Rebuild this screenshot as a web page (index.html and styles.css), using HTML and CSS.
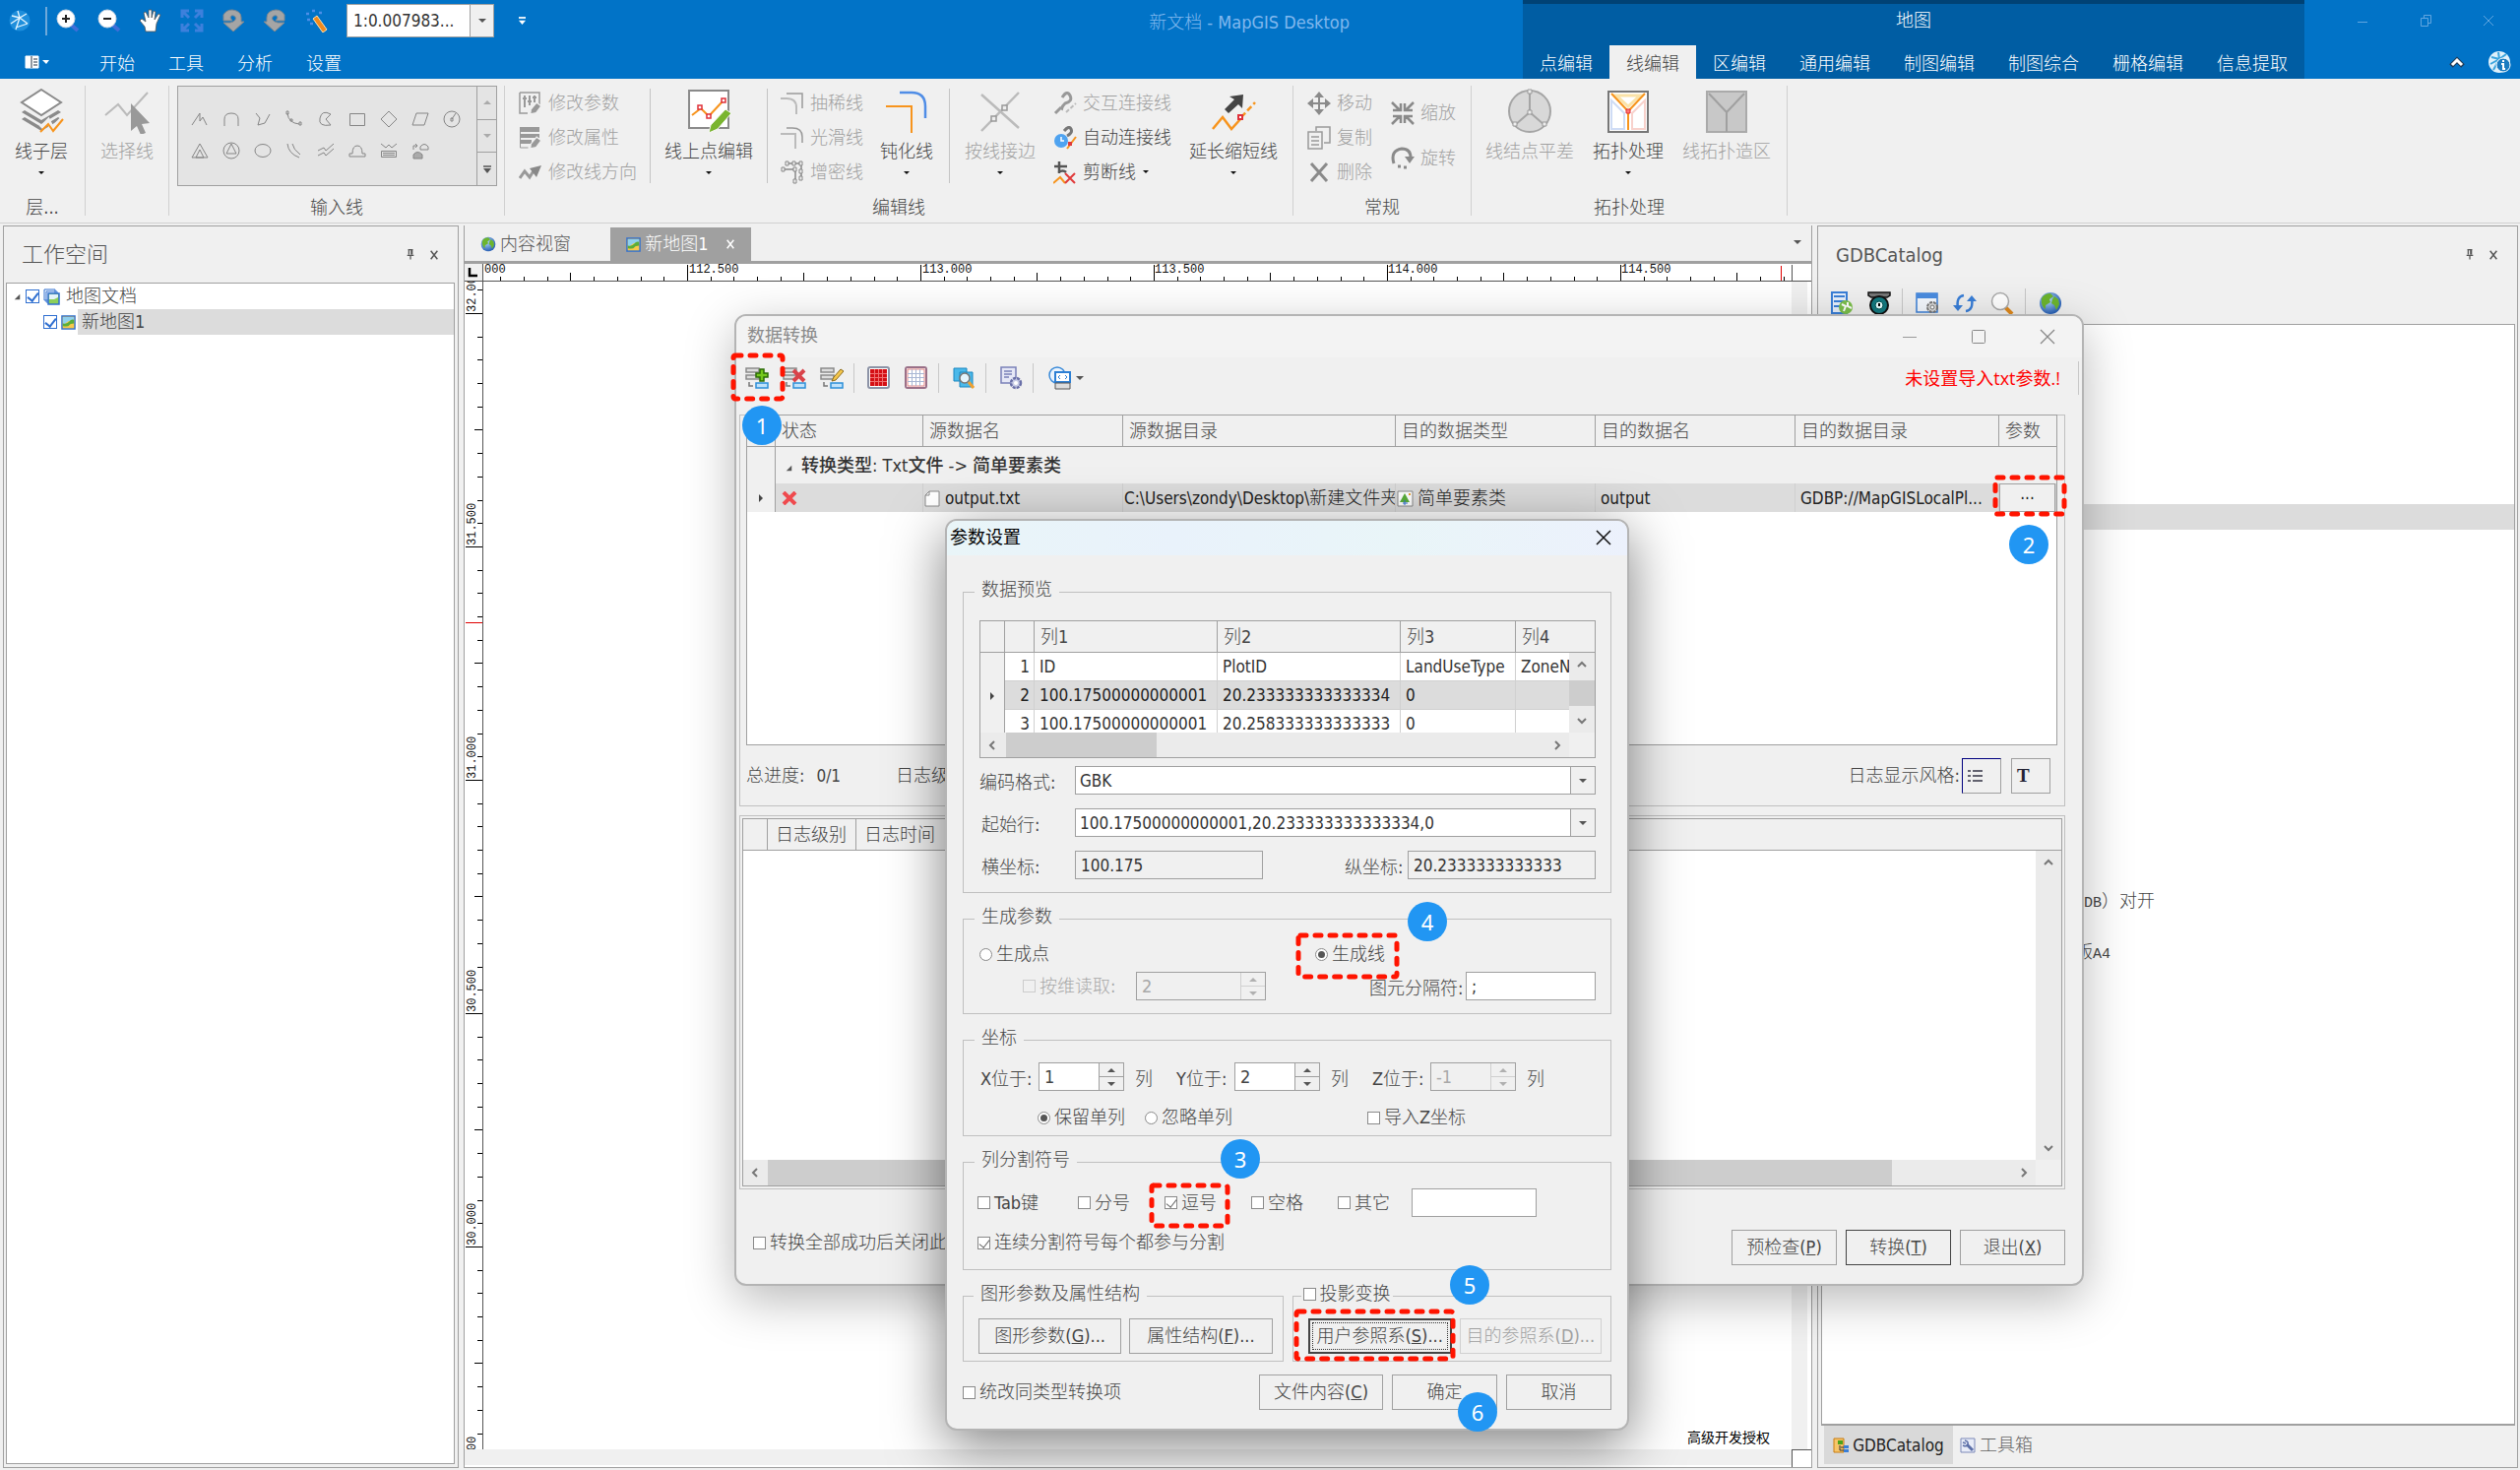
FILE: index.html
```html
<!DOCTYPE html>
<html lang="zh-CN">
<head>
<meta charset="utf-8">
<title>新文档 - MapGIS Desktop</title>
<link rel="stylesheet" href="styles.css">
</head>
<body>
<svg class="defs" aria-hidden="true">
  <defs>
    <radialGradient id="sea" cx="40%" cy="35%" r="70%"><stop offset="0" stop-color="#b5dcf8"/><stop offset="1" stop-color="#1d56b0"/></radialGradient>
    <symbol id="globe" viewBox="0 0 24 24"><circle cx="12" cy="12" r="11" fill="url(#sea)"/><path d="M3 7q3-5 9-5l3 3-4 3 1 3-5 3v4q-5-3-4-11zM16 5l4 3 1 5-3 6-2-5-3-2 1-4z" fill="#6cb52d"/></symbol>
    <symbol id="mapdoc" viewBox="0 0 16 16"><rect x="1" y="1" width="14" height="14" fill="#f8c94a" stroke="#2f6fd0" stroke-width="1.500"/><path d="M2 2h12v5Q9 5 6 8T2 9z" fill="#8fd0ee"/><path d="M2 9q5 1 7-2t5-2v4q-4 0-5 2t-7 1z" fill="#5aae3a"/></symbol>
    <symbol id="pin" viewBox="0 0 12 14"><path d="M3 1h6M4 1v6M7 1v6M8 1v6M2 8h8M6 8v5" stroke="#555" stroke-width="1.5" fill="none"/></symbol>
    <symbol id="cross" viewBox="0 0 12 12"><path d="M2 1l8 10M10 1L2 11" stroke="currentColor" stroke-width="1.800" fill="none"/></symbol>
    <symbol id="up" viewBox="0 0 12 12"><path d="M2 8l4-4 4 4" stroke="#777" stroke-width="2" fill="none"/></symbol>
    <symbol id="down" viewBox="0 0 12 12"><path d="M2 4l4 4 4-4" stroke="#777" stroke-width="2" fill="none"/></symbol>
    <symbol id="left" viewBox="0 0 12 12"><path d="M8 2L4 6l4 4" stroke="#777" stroke-width="2" fill="none"/></symbol>
    <symbol id="right" viewBox="0 0 12 12"><path d="M4 2l4 4-4 4" stroke="#777" stroke-width="2" fill="none"/></symbol>
    <symbol id="rows" viewBox="0 0 24 24"><path d="M1 2h13v4H1zM1 9h13v4H1z" fill="#ddd" stroke="#8a8a8a" stroke-width="1.5"/><path d="M4 16v4h4" stroke="#777" stroke-width="1.5" fill="none"/><rect x="11" y="17" width="12" height="5" fill="#bfe2fb" stroke="#2c8fd8" stroke-width="1.5"/></symbol>
    <symbol id="pencil" viewBox="0 0 24 24"><path d="M3 22l1-8L14 2l8 6-9 12z" fill="#999" stroke="#f0f0f0" stroke-width="2"/></symbol>
  </defs>
</svg>

<header class="titlebar">
  <div class="tb-left">
    <div class="quick">
      <svg class="i24" viewBox="0 0 24 24"><circle cx="12" cy="12" r="10.500" fill="#1f8fdc"/><path d="M4 7l8 2 7-4M12 9L8 21M12 9l8 6M3 15l9-6-2-7M8 19l12-4" stroke="#e6f6ff" stroke-width="1.300" fill="none"/></svg>
      <span class="q-sep"></span>
      <button class="q" aria-label="放大"><svg class="i24" viewBox="0 0 24 24"><path d="M15 16l7 6" stroke="#3f6fd8" stroke-width="4"/><circle cx="10" cy="10" r="9" fill="#fff" stroke="#cfd8e4"/><path d="M6 10h8M10 6v8" stroke="#222" stroke-width="2"/></svg></button>
      <button class="q" aria-label="缩小"><svg class="i24" viewBox="0 0 24 24"><path d="M15 16l7 6" stroke="#3f6fd8" stroke-width="4"/><circle cx="10" cy="10" r="9" fill="#fff" stroke="#cfd8e4"/><path d="M6 10h8" stroke="#222" stroke-width="2"/></svg></button>
      <button class="q" aria-label="漫游"><svg class="i24" viewBox="0 0 24 24"><path d="M7 23l-1-5-5-6 2-2 4 3L5 4l2-1 3 6V1h3v8l2-7 2 1-1 8 4-6 2 1-4 9-1 8z" fill="#fff" stroke="#555" stroke-width=".8"/></svg></button>
      <button class="q" aria-label="全图"><svg class="i24" viewBox="0 0 24 24"><path d="M2 9V2h7M2 2l7 7M15 2h7v7M22 2l-7 7M2 15v7h7M2 22l7-7M22 15v7h-7M22 22l-7-7" stroke="#3d80dc" stroke-width="3" fill="none"/></svg></button>
      <button class="q" aria-label="上一视图"><svg class="i24" viewBox="0 0 24 24"><path d="M2 12V6q3-5 9-5 9 1 9 8v4h3L12 23 2 14h7q7-2 5-6-4-3-5 1l2 3z" fill="#a5a5a5" stroke="#7d8790"/></svg></button>
      <button class="q" aria-label="下一视图"><svg class="i24" viewBox="0 0 24 24"><path d="M22 12V6q-3-5-9-5-9 1-9 8v4H1l11 10 10-9h-7q-7-2-5-6 4-3 5 1l-2 3z" fill="#a5a5a5" stroke="#7d8790"/></svg></button>
      <button class="q" aria-label="编辑工具"><svg class="i24" viewBox="0 0 24 24"><path d="M9 10l4-3 10 14-4 3z" fill="#f08a1d" stroke="#ffe1b0"/><path d="M2 5h3M8 2h3M3 11h3M15 4h3M6 15h3" stroke="#4d8ee8" stroke-width="2.500"/></svg></button>
      <div class="scale">
        <input type="text" value="1:0.007983..." aria-label="比例尺">
        <button aria-label="选择比例尺"><i class="tri"></i></button>
      </div>
      <button class="q q-more" aria-label="自定义"><svg width="7" height="9" viewBox="0 0 8 10"><path d="M0 1h8" stroke="#fff" stroke-width="2"/><path d="M0 4h8L4 9z" fill="#fff"/></svg></button>
      <h1 class="title">新文档 - MapGIS Desktop</h1>
    </div>
    <nav class="tabs">
      <button class="filebtn" aria-label="文件"><svg width="26" height="14" viewBox="0 0 26 14"><path d="M1 1h13v12H1z" fill="#fff" stroke="#fff"/><path d="M7 1v12M9 4h4M9 7h4M9 10h4" stroke="#234"/><path d="M18 5h7l-3 4z" fill="#fff"/></svg></button>
      <a href="#start">开始</a><a href="#tool">工具</a><a href="#analysis">分析</a><a href="#settings">设置</a>
    </nav>
  </div>
  <div class="ctx">
    <div class="ctx-title">地图</div>
    <nav class="tabs">
      <a href="#p">点编辑</a><a href="#l" class="on">线编辑</a><a href="#r">区编辑</a><a href="#g">通用编辑</a><a href="#m">制图编辑</a><a href="#z">制图综合</a><a href="#s">栅格编辑</a><a href="#x">信息提取</a>
    </nav>
  </div>
  <div class="tb-right">
    <div class="winbtns">
      <button aria-label="最小化"><svg width="12" height="12" viewBox="0 0 12 12"><path d="M1 7.500h10" stroke="#62a6e0"/></svg></button>
      <button aria-label="还原"><svg width="12" height="12" viewBox="0 0 12 12"><path d="M1.500 3.500h7v8h-7zM4.500 3V.5h7v8H9" stroke="#62a6e0" fill="none"/></svg></button>
      <button aria-label="关闭"><svg width="12" height="12" viewBox="0 0 12 12"><path d="M1 1l10 10M11 1L1 11" stroke="#62a6e0"/></svg></button>
    </div>
    <div class="helpbtns">
      <button aria-label="收起功能区"><svg width="16" height="14" viewBox="0 0 16 14"><path d="M2 11l6-6 6 6" stroke="#223a55" stroke-width="5" fill="none"/><path d="M3 10l5-5 5 5" stroke="#fff" stroke-width="3" fill="none"/></svg></button>
      <button aria-label="关于"><svg class="i24" viewBox="0 0 24 24"><circle cx="12" cy="12" r="11" fill="#dff1fb"/><path d="M4 7l8 2 7-5M12 9L6 20M3 14l9-5-1-7" stroke="#3ba5de" stroke-width="2" fill="none"/><circle cx="16" cy="15" r="7" fill="#1a7bc0" stroke="#fff"/><path d="M14 14h2v5h2M16 10v2" stroke="#fff" stroke-width="2" fill="none"/></svg></button>
    </div>
  </div>
</header>

<section class="ribbon" aria-label="线编辑">
  <div class="grp g-layer">
    <div class="grp-body">
      <button class="big"><svg viewBox="0 0 46 46"><path d="M3 31l20 12 20-12-3-2-17 10L6 29zM3 24l20 12 20-12-3-2-17 10L6 22z" fill="#8a8a8a"/><path d="M23 1l20 13-20 13L3 14z" fill="#fff" stroke="#8a8a8a" stroke-width="2"/><path d="M23 40l7-7 4 8 11-11" stroke="#f0f0f0" stroke-width="5" fill="none"/><path d="M22 44l8-8 5 7 10-12" stroke="#f7941d" stroke-width="2" fill="none"/></svg><span>线子层</span><i class="tri"></i></button>
    </div>
    <div class="grp-name">层...</div>
  </div>
  <div class="grp g-select">
    <div class="grp-body">
      <button class="big" disabled><svg viewBox="0 0 46 46"><path d="M1 27l13-11 9 11L44 4" stroke="#bbb" stroke-width="2" fill="none"/><path d="M27 15l19 20-8 1 4 9-5 2-4-9-6 5z" fill="#999"/></svg><span>选择线</span></button>
    </div>
    <div class="grp-name"></div>
  </div>
  <div class="grp g-input">
    <div class="grp-body">
      <div class="gallery">
        <div class="cells">
          <svg viewBox="0 0 18 18"><path d="M1 15L9 3v8l3-4 4 8"/></svg><svg viewBox="0 0 18 18"><path d="M2 16V9q0-6 7-6t7 6v7"/></svg><svg viewBox="0 0 18 18"><path d="M2 3l4 5-2 7 7-2 5-9"/></svg><svg viewBox="0 0 18 18"><path d="M2 3q1 10 12 11M1 1h2v3H1zM14 12h2v3h-2zM5 9h2v2H5z"/></svg><svg viewBox="0 0 18 18"><path d="M14 4Q5-1 3 8t11 7l-5-6 5-5z"/></svg><svg viewBox="0 0 18 18"><path d="M1.500 3.500h15v12h-15z"/></svg><svg viewBox="0 0 18 18"><path d="M9 1l8 8-8 8-8-8z"/></svg><svg viewBox="0 0 18 18"><path d="M5 3h12l-4 12H1z"/></svg><svg viewBox="0 0 18 18"><circle cx="9" cy="9" r="8"/><path d="M9 9l4-6M8 8h2v3H8z"/></svg>
          <svg viewBox="0 0 18 18"><path d="M9 2l8 14H1zM9 8l-4 8h8z"/></svg><svg viewBox="0 0 18 18"><circle cx="9" cy="9" r="8"/><path d="M9 2l5 10H4z"/></svg><svg viewBox="0 0 18 18"><ellipse cx="9" cy="9" rx="8" ry="6.500"/></svg><svg viewBox="0 0 18 18"><path d="M2 2q1 10 12 14M7 2q1 6 8 11"/></svg><svg viewBox="0 0 18 18"><path d="M1 9l6-3 2 3 8-7M1 14l6-3 2 3 8-7"/></svg><svg viewBox="0 0 18 18"><path d="M1 15h16v-3h-3q0-8-5-8t-5 8H1z"/></svg><svg viewBox="0 0 18 18"><path d="M1 2l5 4 3-3 3 3 5-4M1.500 9.500h15v6h-15zM3 11.500h12M3 13.500h12" /></svg><svg viewBox="0 0 18 18"><path d="M9 8V5q4-5 8 0v3zM2 8V4h4M4 2l2 2-2 2"/><path d="M2 17v-4q4-5 9 0v4z" fill="#aaa"/></svg>
        </div>
        <div class="gal-scroll">
          <button aria-label="上一行"><i class="tri up dim"></i></button>
          <button aria-label="下一行"><i class="tri dim"></i></button>
          <button aria-label="展开"><svg width="8" height="8" viewBox="0 0 8 8"><path d="M0 1h8" stroke="#555" stroke-width="1.500"/><path d="M0 3h8L4 8z" fill="#555"/></svg></button>
        </div>
      </div>
    </div>
    <div class="grp-name">输入线</div>
  </div>
  <div class="grp g-edit">
    <div class="grp-body">
      <div class="smalls c1">
        <button disabled><svg viewBox="0 0 24 24"><path d="M1 1h20v12M1 1v21h8" fill="none" stroke="#999" stroke-width="1.500"/><path d="M6 4v12M11 4v10M16 4v7M4 7h4M9 10h4M14 6h4" stroke="#999" stroke-width="2"/><use href="#pencil" x="10" y="10" width="14" height="14"/></svg>修改参数</button>
        <button disabled><svg viewBox="0 0 24 24"><path d="M1 1h20v5H1zM1 8h20v4H1zM1 14h12v4H1z" fill="#999"/><path d="M1.500 6v16h8" fill="none" stroke="#999"/><use href="#pencil" x="10" y="10" width="14" height="14"/></svg>修改属性</button>
        <button disabled><svg viewBox="0 0 24 24"><path d="M1 18l5-7 5 6 5-8" fill="none" stroke="#999" stroke-width="3"/><path d="M11 8l12-3-5 12z" fill="#888"/></svg>修改线方向</button>
      </div>
      <span class="r-sep"></span>
      <button class="big w118"><svg viewBox="0 0 46 46"><path d="M3 2h40v38H3z" fill="#fff" stroke="#8a8a8a" stroke-width="2"/><path d="M6 27l9-7 8 8 14-15" stroke="#f7941d" stroke-width="2" fill="none"/><path d="M12 17h4v4h-4zM21 26h4v4h-4zM36 10h4v4h-4z" fill="#fff" stroke="#e0303a" stroke-width="1.500"/><path d="M23 45l2-8 15-16 6 4-14 16z" fill="#7ab530" stroke="#f8f8f8"/></svg><span>线上点编辑</span><i class="tri"></i></button>
      <span class="r-sep"></span>
      <div class="smalls c2">
        <button disabled><svg viewBox="0 0 24 24"><path d="M6 2h16v15" fill="none" stroke="#999" stroke-width="1.500"/><path d="M0 7h6q10 0 10 9v7" fill="none" stroke="#bbb" stroke-width="2"/></svg>抽稀线</button>
        <button disabled><svg viewBox="0 0 24 24"><path d="M6 2h6q10 0 10 9v6" fill="none" stroke="#999" stroke-width="1.500"/><path d="M0 8h15v15" fill="none" stroke="#bbb" stroke-width="2"/></svg>光滑线</button>
        <button disabled><svg viewBox="0 0 24 24"><path d="M6 3h15v15M2 9h13v13" fill="none" stroke="#888" stroke-width="1.500"/><path d="M5 1h3v4H5zM12 1h3v4h-3zM19 1h3v4h-3zM19 9h3v4h-3zM1 7h3v4H1zM13 7h3v4h-3zM19 16h3v4h-3zM13 19h3v4h-3z" fill="#eee" stroke="#888"/></svg>增密线</button>
      </div>
      <button class="big w86"><svg viewBox="0 0 46 46"><path d="M16 4h12q14 0 14 14v12" stroke="#4f8de6" stroke-width="2.500" fill="none"/><path d="M2 18h26v27" stroke="#f7941d" stroke-width="2" fill="none"/></svg><span>钝化线</span><i class="tri"></i></button>
      <span class="r-sep"></span>
      <button class="big w102" disabled><svg viewBox="0 0 46 46"><path d="M4 6l38 34M42 4L4 43" stroke="#bbb" stroke-width="2.500"/><path d="M25 17h5v5h-5zM14 28h5v5h-5z" fill="#eee" stroke="#999" stroke-width="1.500"/></svg><span>按线接边</span><i class="tri"></i></button>
      <div class="smalls c3">
        <button disabled><svg viewBox="0 0 24 24"><path d="M9 6q5-8 8-2t-5 8q-5 5-2 6M2 22l6-6" stroke="#999" stroke-width="3" fill="none"/><path d="M13 21l10-9" stroke="#bbb" stroke-width="2" stroke-dasharray="4 2"/></svg>交互连接线</button>
        <button><svg viewBox="0 0 24 24"><path d="M11 5q5-6 7-2t-4 7" stroke="#777" stroke-width="3" fill="none"/><circle cx="8" cy="15" r="7" fill="#4fa3f0"/><path d="M8 11v4h3" stroke="#fff" stroke-width="1.500" fill="none"/><path d="M14 23l9-12" stroke="#f7941d" stroke-width="2"/><path d="M15 16h4v4h-4z" fill="#e03a3a"/></svg>自动连接线</button>
        <button><svg viewBox="0 0 24 24"><path d="M6 1v12M1 6h13M5 12q5-3 8 0" stroke="#555" stroke-width="2.500" fill="none"/><path d="M0 23l7-6 5 6" stroke="#f7941d" stroke-width="2" fill="none"/><path d="M12 13l10 10M22 13L12 23" stroke="#e03a3a" stroke-width="2"/></svg>剪断线<i class="tri"></i></button>
      </div>
      <button class="big grow"><svg viewBox="0 0 46 46"><path d="M14 21l10-10-5-3 14-2-1 14-4-4-10 9z" fill="#444"/><path d="M2 41l10-12 9 12 10-11" stroke="#f7941d" stroke-width="2.500" fill="none"/><path d="M31 29l14-15" stroke="#f7941d" stroke-width="2.500" stroke-dasharray="6 3"/><path d="M28 27h4v4h-4z" fill="#fff" stroke="#e0303a" stroke-width="2"/></svg><span>延长缩短线</span><i class="tri"></i></button>
    </div>
    <div class="grp-name">编辑线</div>
  </div>
  <div class="grp g-common">
    <div class="grp-body">
      <div class="smalls c4">
        <button disabled><svg viewBox="0 0 24 24"><path d="M12 0l5 6h-4v5h5V7l6 5-6 5v-4h-5v5h4l-5 6-5-6h4v-5H6v4l-6-5 6-5v4h5V6H7z" fill="#8a8a8a"/></svg>移动</button>
        <button disabled><svg viewBox="0 0 24 24"><path d="M9 5V1h14v16h-6" fill="none" stroke="#999" stroke-width="1.500"/><path d="M1 6h14v17H1zM4 11h8M4 15h8M4 19h8" fill="none" stroke="#999" stroke-width="1.500"/></svg>复制</button>
        <button disabled><svg viewBox="0 0 24 24"><path d="M4 3l16 18M20 3L4 21" stroke="#8a8a8a" stroke-width="3"/></svg>删除</button>
      </div>
      <div class="smalls c5">
        <button disabled><svg viewBox="0 0 24 24"><path d="M1 1l8 8M2 9h8V2M23 1l-8 8M22 9h-8V2M1 23l8-8M2 15h8v7M23 23l-8-8M22 15h-8v7" stroke="#8a8a8a" stroke-width="2.500" fill="none"/></svg>缩放</button>
        <button disabled><svg viewBox="0 0 24 24"><path d="M3 17Q-1 4 11 2q9 0 9 9" stroke="#8a8a8a" stroke-width="3" fill="none"/><path d="M14 10h10l-5 7z" fill="#8a8a8a"/><path d="M7 20h3M13 21h3" stroke="#8a8a8a" stroke-width="3"/></svg>旋转</button>
      </div>
    </div>
    <div class="grp-name">常规</div>
  </div>
  <div class="grp g-topo">
    <div class="grp-body">
      <button class="big w118" disabled><svg viewBox="0 0 46 46"><circle cx="23" cy="23" r="21" fill="#d8d8d8" stroke="#a5a5a5" stroke-width="2"/><path d="M23 3v21L8 37M23 24l15 13" stroke="#a5a5a5" stroke-width="2" fill="none"/><path d="M21 1h4v4h-4zM21 22h4v4h-4zM6 34h4v4H6zM36 34h4v4h-4z" fill="#eee" stroke="#999"/></svg><span>线结点平差</span></button>
      <button class="big w82"><svg viewBox="0 0 46 46"><path d="M3 3h40v41H3z" fill="#fff" stroke="#777" stroke-width="2"/><path d="M11 7h24L23 18z" fill="none" stroke="#fbe3a8" stroke-width="3"/><path d="M6 12l13 13v16H6z" fill="none" stroke="#cfdcf5" stroke-width="2"/><path d="M40 12L27 25v16h13z" fill="none" stroke="#f8d2cc" stroke-width="2"/><path d="M6 5l17 18L40 5M23 23v19" stroke="#f7941d" stroke-width="2" fill="none"/><path d="M21 21h4v4h-4z" fill="#f77" stroke="#e0303a"/></svg><span>拓扑处理</span><i class="tri"></i></button>
      <button class="big w118" disabled><svg viewBox="0 0 46 46"><path d="M3 3h40v41H3z" fill="#c8c8c8" stroke="#aaa" stroke-width="2"/><path d="M5 5l18 19L41 5M23 24v20" stroke="#a0a0a0" stroke-width="2" fill="none"/></svg><span>线拓扑造区</span></button>
    </div>
    <div class="grp-name">拓扑处理</div>
  </div>
</section>

<main class="work">
  <aside class="panel workspace">
    <div class="panel-head"><h2>工作空间</h2><button aria-label="固定"><svg width="10" height="13"><use href="#pin"/></svg></button><button aria-label="关闭"><svg width="10" height="10"><use href="#cross"/></svg></button></div>
    <ul class="tree">
      <li><svg width="7" height="7" viewBox="0 0 9 9"><path d="M8 1v7H1z" fill="#555"/></svg><input type="checkbox" id="t1" checked><svg width="17" height="17" viewBox="0 0 17 17"><path d="M1 1h11v11H1zM3 3h11v11H3z" fill="#fff" stroke="#2f6fd0"/><path d="M5 5h11v11H5z" fill="#8ccf5a" stroke="#2f6fd0" stroke-width="1.500"/><path d="M6 6h9v3l-4 2H6z" fill="#e4f3fa"/></svg><label for="t1">地图文档</label></li>
      <li class="child"><input type="checkbox" id="t2" checked><svg width="15" height="15"><use href="#mapdoc"/></svg><label for="t2">新地图1</label></li>
    </ul>
  </aside>

  <section class="center">
    <div class="doctabs">
      <button class="doctab"><svg width="16" height="16"><use href="#globe"/></svg>内容视窗</button>
      <button class="doctab on"><svg width="15" height="15"><use href="#mapdoc"/></svg>新地图1<svg class="x" width="10" height="10"><use href="#cross"/></svg></button>
      <button class="tablist" aria-label="窗口列表"><i class="tri"></i></button>
    </div>
    <div class="canvas">
      <div class="origin"><svg width="18" height="17" viewBox="0 0 18 17"><path d="M5 4v8h8" stroke="#000" stroke-width="2.500" fill="none"/></svg></div>
      <svg class="ruler-h">
        <defs><pattern id="rh" x="207" width="237" height="18" patternUnits="userSpaceOnUse"><path d="M.5 1v17M24.500 13v5M47.500 13v5M71.500 13v5M95.500 13v5M118.500 9v9M142.500 13v5M166.500 13v5M190.500 13v5M213.500 13v5" stroke="#000"/></pattern></defs>
        <rect width="1329" height="18" fill="url(#rh)"/>
        <path d="M1318.500 2v16" stroke="#e00000"/><path d="M1329.500 1v17" stroke="#555"/>
        <text x="1" y="9">000</text><text x="209" y="9">112.500</text><text x="446" y="9">113.000</text><text x="682" y="9">113.500</text><text x="919" y="9">114.000</text><text x="1156" y="9">114.500</text>
      </svg>
      <svg class="ruler-v">
        <defs><pattern id="rv" y="32" width="18" height="237" patternUnits="userSpaceOnUse"><path d="M1 .5h17M13 24.500h5M13 47.500h5M13 71.500h5M13 95.500h5M10 118.500h8M13 142.500h5M13 166.500h5M13 190.500h5M13 213.500h5" stroke="#000"/></pattern></defs>
        <rect width="18" height="1186" fill="url(#rv)"/>
        <path d="M1 346.500h17" stroke="#e00000"/>
        <text transform="translate(11 31) rotate(-90)">32.000</text><text transform="translate(11 268) rotate(-90)">31.500</text><text transform="translate(11 505) rotate(-90)">31.000</text><text transform="translate(11 742) rotate(-90)">30.500</text><text transform="translate(11 979) rotate(-90)">30.000</text><text transform="translate(11 1216) rotate(-90)">29.500</text>
      </svg>
      <div class="map"><span class="licence">高级开发授权</span></div>
      <div class="m-vs"></div>
      <div class="m-hs"></div>
      <div class="m-corner"></div>
    </div>
  </section>

  <aside class="panel catalog">
    <div class="panel-head"><h2>GDBCatalog</h2><button aria-label="固定"><svg width="10" height="13"><use href="#pin"/></svg></button><button aria-label="关闭"><svg width="10" height="10"><use href="#cross"/></svg></button></div>
    <div class="cat-tools">
      <button aria-label="附加数据库"><svg class="i24" viewBox="0 0 24 24"><path d="M2 1h15v21H2z" fill="#e9f1fd" stroke="#3a7fd8" stroke-width="2"/><path d="M4 5h11M4 10h11M4 15h6" stroke="#3a7fd8" stroke-width="2"/><circle cx="16" cy="16" r="7" fill="#7cc04b"/><path d="M12 13l4 2-2 5M18 11v4l4 2" stroke="#fff" stroke-width="2" fill="none"/></svg></button>
      <button aria-label="数据源"><svg class="i24" viewBox="0 0 24 24"><path d="M1 1h22v3l-3 2H4L1 4z" fill="#777" stroke="#111" stroke-width="1.500"/><circle cx="12" cy="14" r="9" fill="#147a80" stroke="#111" stroke-width="2"/><circle cx="12" cy="14" r="4" fill="#e8ffff" stroke="#055"/><path d="M11 12h2v3h-2z"/></svg></button>
      <span class="t-sep"></span>
      <button aria-label="环境设置"><svg class="i24" viewBox="0 0 24 24"><path d="M1 2h21v19H1z" fill="#f4f8fe" stroke="#3a7fd8" stroke-width="1.500"/><path d="M1 2h21v5H1z" fill="#4a8ce0"/><circle cx="17" cy="16" r="5" fill="#ddd" stroke="#777" stroke-width="2" stroke-dasharray="3 1"/><circle cx="17" cy="16" r="2" fill="#fff" stroke="#777"/></svg></button>
      <button aria-label="刷新"><svg class="i24" viewBox="0 0 24 24"><path d="M11 4Q3 5 5 17M13 20q8-1 6-13" stroke="#3a7fd8" stroke-width="2.500" fill="none"/><path d="M0 14h10l-5 6zM14 10h10l-5-6z" fill="#3a7fd8"/></svg></button>
      <button aria-label="搜索"><svg class="i24" viewBox="0 0 24 24"><path d="M15 16l7 7" stroke="#e08a1d" stroke-width="4"/><circle cx="10" cy="10" r="8.500" fill="#fff" stroke="#aaa" stroke-width="1.500"/></svg></button>
      <span class="t-sep"></span>
      <button aria-label="地球"><svg class="i24"><use href="#globe"/></svg></button>
    </div>
    <ul class="cat-list">
      <li class="picked"></li>
      <li class="sys">系统库（<span>GDB</span>）对开</li>
      <li class="tpl">模板横版<span>A4</span></li>
    </ul>
    <div class="cat-tabs">
      <button class="on"><svg width="16" height="16" viewBox="0 0 16 16"><path d="M1 1h10v14H1z" fill="#f7c56a" stroke="#c87d10"/><path d="M5 3h5v4H5z" fill="#4ba31c"/><path d="M7 8v5h4M8 10h3" stroke="#333" fill="none"/><path d="M11 8h5v3h-5zM11 12h5v3h-5z" fill="#3a7fd8"/></svg>GDBCatalog</button>
      <button><svg width="16" height="16" viewBox="0 0 16 16"><path d="M1 1h14v14H1z" fill="#e8ecf8" stroke="#7c89b8"/><path d="M7 7l6 6" stroke="#5c6fa8" stroke-width="3"/><path d="M5 3q4 1 3 4t-5 1M3 5l3 1" stroke="#5c6fa8" stroke-width="1.500" fill="none"/></svg>工具箱</button>
    </div>
  </aside>
</main>

<section class="dlg convert" role="dialog" aria-label="数据转换">
  <div class="dlg-title"><span>数据转换</span>
    <button aria-label="最小化"><svg width="16" height="16" viewBox="0 0 16 16"><path d="M1 8.500h14" stroke="#999"/></svg></button>
    <button aria-label="最大化"><svg width="16" height="16" viewBox="0 0 16 16"><rect x="1.500" y="1.500" width="13" height="13" rx="1" fill="none" stroke="#888"/></svg></button>
    <button aria-label="关闭"><svg width="16" height="16" viewBox="0 0 16 16"><path d="M1 1l14 14M15 1L1 15" stroke="#888" stroke-width="1.300"/></svg></button>
  </div>
  <div class="cv-tools">
    <button aria-label="添加"><svg class="i24" viewBox="0 0 24 24"><use href="#rows"/><path d="M15 3h4v4h4v4h-4v4h-4v-4h-4V7h4z" fill="#76c91e" stroke="#2a6b06" stroke-width="1.500"/></svg></button>
    <button aria-label="删除"><svg class="i24" viewBox="0 0 24 24"><use href="#rows"/><path d="M11 4l11 11M22 4L11 15" stroke="#d9434a" stroke-width="4"/></svg></button>
    <button aria-label="编辑"><svg class="i24" viewBox="0 0 24 24"><use href="#rows"/><path d="M12 15l2-4 7-8 3 2-8 9z" fill="#f4c64c" stroke="#8b6a1a"/></svg></button>
    <span class="t-sep"></span>
    <button aria-label="全选"><svg class="i24" viewBox="0 0 24 24"><rect x="1" y="1" width="21" height="21" rx="2" fill="#fff" stroke="#8c93a6" stroke-width="2"/><path d="M3 3h17v17H3z" fill="#d40f14"/><path d="M7.500 3v17M11.500 3v17M15.500 3v17M3 7.500h17M3 11.500h17M3 15.500h17" stroke="#f07070"/></svg></button>
    <button aria-label="反选"><svg class="i24" viewBox="0 0 24 24"><rect x="1" y="1" width="21" height="21" rx="2" fill="#fff" stroke="#9a7088" stroke-width="2"/><path d="M3 3h17v17H3z" fill="#fff" stroke="#e08080"/><path d="M7.500 3v17M11.500 3v17M15.500 3v17M3 7.500h17M3 11.500h17M3 15.500h17" stroke="#a9b7d4"/></svg></button>
    <span class="t-sep"></span>
    <button aria-label="预览"><svg class="i24" viewBox="0 0 24 24"><path d="M2 2h13v13H2zM8 6h13v15H8z" fill="#4bb9ea" stroke="#1b86c0"/><circle cx="13" cy="12" r="5" fill="#e4f4fc" stroke="#777" stroke-width="1.500"/><path d="M17 16l5 6" stroke="#f0a030" stroke-width="3"/></svg></button>
    <span class="t-sep"></span>
    <button aria-label="参数"><svg class="i24" viewBox="0 0 24 24"><path d="M2 1h15v16H2z" fill="#e6e8f6" stroke="#7a80b8" stroke-width="1.500"/><path d="M5 5h8M5 8h8M5 11h5" stroke="#7a80b8" stroke-width="1.500"/><circle cx="17" cy="17" r="5" fill="#c9cde6" stroke="#6a70a8" stroke-width="2.500" stroke-dasharray="3 1"/><circle cx="17" cy="17" r="2" fill="#fff"/></svg></button>
    <span class="t-sep"></span>
    <button class="drop" aria-label="工具"><svg class="i24" viewBox="0 0 24 24"><circle cx="9" cy="9" r="8" fill="#eaf3fd" stroke="#3a8ad8" stroke-width="1.500"/><path d="M7 6h15v10H7z" fill="#fff" stroke="#2c7fd4" stroke-width="2"/><path d="M12 9l-2 2 2 2M17 9l2 2-2 2" stroke="#2c7fd4" fill="none"/><path d="M7 17h15v6H7z" fill="#ddd" stroke="#555"/></svg><i class="tri"></i></button>
    <span class="warn">未设置导入txt参数.!</span>
    <span class="t-sep last"></span>
  </div>
  <div class="frame one">
    <div class="grid-box">
      <table class="jobs">
        <colgroup><col class="j0"><col class="j1"><col class="j2"><col class="j3"><col class="j4"><col class="j5"><col class="j6"><col></colgroup>
        <thead><tr><th></th><th>状态</th><th>源数据名</th><th>源数据目录</th><th>目的数据类型</th><th>目的数据名</th><th>目的数据目录</th><th>参数</th></tr></thead>
        <tbody>
          <tr class="jgroup"><td></td><td colspan="7"><svg width="7" height="7" viewBox="0 0 9 9"><path d="M8 1v7H1z" fill="#555"/></svg><b>转换类型: Txt文件 -&gt; 简单要素类</b></td></tr>
          <tr class="job"><td><svg width="6" height="8" viewBox="0 0 6 8"><path d="M1 0l4 4-4 4z" fill="#444"/></svg></td><td class="st"><svg width="16" height="14" viewBox="0 0 16 14"><path d="M2 1l12 12M14 1L2 13" stroke="#ef4a4e" stroke-width="4"/></svg></td><td><svg width="17" height="17" viewBox="0 0 17 17"><path d="M5 1h10v15H1V5z" fill="#fff" stroke="#888"/><path d="M5 1v4H1" fill="none" stroke="#888"/></svg>output.txt</td><td>C:\Users\zondy\Desktop\<span class="cj">新建文件夹</span></td><td><svg width="17" height="17" viewBox="0 0 17 17"><path d="M1 1h15v15H1z" fill="#fff" stroke="#888"/><path d="M8 3l5 9H3z" fill="#5aae3a"/><path d="M8 10v5M6 13h5" stroke="#2f6fd0"/><path d="M12 3h2v2h-2z" fill="#e8a030"/></svg><span class="cj">简单要素类</span></td><td class="pad">output</td><td class="pad">GDBP://MapGISLocalPl...</td><td class="btncell"><button aria-label="参数设置">···</button></td></tr>
        </tbody>
      </table>
    </div>
    <div class="progress"><span>总进度:</span><span class="count">0/1</span><span class="lvl">日志级别:</span><span class="style">日志显示风格:</span>
      <button class="sq on" aria-label="列表"><svg width="16" height="14" viewBox="0 0 16 14"><path d="M0 2h3M0 7h3M0 12h3M5 2h10M5 7h10M5 12h10" stroke="#334" stroke-width="1.500"/></svg></button><button class="sq t">T</button></div>
  </div>
  <div class="frame two">
    <div class="log">
      <table><colgroup><col class="l0"><col class="l1"><col></colgroup><thead><tr><th></th><th>日志级别</th><th>日志时间</th></tr></thead></table>
      <div class="log-body"></div>
      <div class="vs"><svg width="12" height="12"><use href="#up"/></svg><svg width="12" height="12"><use href="#down"/></svg></div>
      <div class="hs"><svg width="12" height="12"><use href="#left"/></svg><span class="thumb"></span><svg width="12" height="12"><use href="#right"/></svg></div>
    </div>
  </div>
  <div class="cv-foot">
    <label class="opt"><input type="checkbox">转换全部成功后关闭此对话框</label>
    <button class="btn">预检查(<u>P</u>)</button><button class="btn strong">转换(<u>T</u>)</button><button class="btn">退出(<u>X</u>)</button>
  </div>
</section>

<section class="dlg params" role="dialog" aria-label="参数设置">
  <div class="dlg-title"><span>参数设置</span><button aria-label="关闭"><svg width="16" height="16" viewBox="0 0 16 16"><path d="M1 1l14 14M15 1L1 15" stroke="#111" stroke-width="1.500"/></svg></button></div>
  <form class="pm">
    <fieldset class="f-prev"><legend>数据预览</legend>
      <div class="prev">
        <div class="prev-clip">
        <table>
          <colgroup><col class="p0"><col class="p1"><col class="p2"><col class="p3"><col class="p4"><col class="p5"></colgroup>
          <thead><tr><th></th><th></th><th>列1</th><th>列2</th><th>列3</th><th>列4</th></tr></thead>
          <tbody>
            <tr><td></td><td>1</td><td>ID</td><td>PlotID</td><td>LandUseType</td><td>ZoneN</td></tr>
            <tr class="cur"><td><svg width="6" height="8" viewBox="0 0 6 8"><path d="M1 0l4 4-4 4z" fill="#444"/></svg></td><td>2</td><td>100.17500000000001</td><td>20.233333333333334</td><td>0</td><td></td></tr>
            <tr><td></td><td>3</td><td>100.17500000000001</td><td>20.258333333333333</td><td>0</td><td></td></tr>
          </tbody>
        </table>
        </div>
        <div class="vs"><svg width="12" height="12"><use href="#up"/></svg><span class="thumb"></span><svg width="12" height="12"><use href="#down"/></svg></div>
        <div class="hs"><svg width="12" height="12"><use href="#left"/></svg><span class="thumb"></span><svg width="12" height="12"><use href="#right"/></svg></div>
      </div>
      <div class="row"><label class="lb" for="enc">编码格式:</label><div class="combo"><select id="enc"><option>GBK</option></select><span><i class="tri"></i></span></div></div>
      <div class="row"><label class="lb nudge" for="st">起始行:</label><div class="combo"><select id="st"><option>100.17500000000001,20.233333333333334,0</option></select><span><i class="tri"></i></span></div></div>
      <div class="row"><label class="lb nudge" for="cx">横坐标:</label><input class="tx ro w191" id="cx" value="100.175" readonly><label class="lb2" for="cy">纵坐标:</label><input class="tx ro w191" id="cy" value="20.2333333333333" readonly></div>
    </fieldset>
    <fieldset class="f-gen"><legend>生成参数</legend>
      <div class="line"><label class="opt w341"><input type="radio" name="gen">生成点</label><label class="opt"><input type="radio" name="gen" checked>生成线</label></div>
      <div class="row ind"><label class="opt off w115"><input type="checkbox" disabled>按维读取:</label><div class="spin off w132"><input value="2" disabled aria-label="维数"><div><button type="button" disabled aria-label="加"><i class="tri up"></i></button><button type="button" disabled aria-label="减"><i class="tri"></i></button></div></div><label class="lb3" for="sepr">图元分隔符:</label><input class="tx w132" id="sepr" value=";"></div>
    </fieldset>
    <fieldset class="f-xy"><legend>坐标</legend>
      <div class="row">
        <div class="axis"><label for="ax">X位于:</label><div class="spin"><input id="ax" value="1"><div><button type="button" aria-label="加"><i class="tri up"></i></button><button type="button" aria-label="减"><i class="tri"></i></button></div></div><span>列</span></div>
        <div class="axis"><label for="ay">Y位于:</label><div class="spin"><input id="ay" value="2"><div><button type="button" aria-label="加"><i class="tri up"></i></button><button type="button" aria-label="减"><i class="tri"></i></button></div></div><span>列</span></div>
        <div class="axis"><label for="az">Z位于:</label><div class="spin off"><input id="az" value="-1" disabled><div><button type="button" disabled aria-label="加"><i class="tri up"></i></button><button type="button" disabled aria-label="减"><i class="tri"></i></button></div></div><span>列</span></div>
      </div>
      <div class="line keep"><label class="opt w109"><input type="radio" name="col" checked>保留单列</label><label class="opt w226"><input type="radio" name="col">忽略单列</label><label class="opt"><input type="checkbox">导入Z坐标</label></div>
    </fieldset>
    <fieldset class="f-sep"><legend>列分割符号</legend>
      <div class="row"><label class="opt w102"><input type="checkbox">Tab键</label><label class="opt w88"><input type="checkbox">分号</label><label class="opt w88"><input type="checkbox" checked>逗号</label><label class="opt w88"><input type="checkbox">空格</label><label class="opt w74"><input type="checkbox">其它</label><input class="tx w127" aria-label="其它分隔符"></div>
      <div class="line"><label class="opt"><input type="checkbox" checked>连续分割符号每个都参与分割</label></div>
    </fieldset>
    <div class="pair">
      <fieldset class="f-btns"><legend>图形参数及属性结构</legend><div class="btns"><button type="button" class="btn">图形参数(<u>G</u>)...</button><button type="button" class="btn">属性结构(<u>F</u>)...</button></div></fieldset>
      <fieldset class="f-btns proj"><legend><label class="opt"><input type="checkbox">投影变换</label></legend><div class="btns"><button type="button" class="btn focus">用户参照系(<u>S</u>)...</button><button type="button" class="btn" disabled>目的参照系(<u>D</u>)...</button></div></fieldset>
    </div>
    <div class="pm-foot"><label class="opt"><input type="checkbox">统改同类型转换项</label><button type="button" class="btn wide">文件内容(<u>C</u>)</button><button type="button" class="btn">确定</button><button type="button" class="btn">取消</button></div>
  </form>
</section>

<svg class="mark m1"><rect x="3" y="3"/></svg><span class="step s1">1</span>
<svg class="mark m2"><rect x="3" y="3"/></svg><span class="step s2">2</span>
<svg class="mark m3"><rect x="3" y="3"/></svg><span class="step s3">3</span>
<svg class="mark m4"><rect x="3" y="3"/></svg><span class="step s4">4</span>
<svg class="mark m5"><rect x="3" y="3"/></svg><span class="step s5">5</span>
<span class="step s6">6</span>
</body>
</html>
```
FILE: styles.css
```css
* { box-sizing: border-box; }
body {
  margin: 0; height: 100vh; display: flex; flex-direction: column; overflow: hidden; position: relative;
  background: #f0f0f0; color: #444;
  font: 300 18px/26px "DejaVu Sans Condensed", "Noto Sans CJK SC", sans-serif;
}
button, input, select { font: inherit; color: inherit; margin: 0; padding: 0; border: 0; background: none; border-radius: 0; min-width: 0; }
button { display: flex; align-items: center; justify-content: center; white-space: nowrap; }
h1, h2 { margin: 0; font-weight: inherit; }
ul { list-style: none; margin: 0; padding: 0; }
a { color: inherit; text-decoration: none; }
svg { display: block; flex: none; }
.defs { position: absolute; width: 0; height: 0; }
.i24 { width: 24px; height: 24px; }
.tri { display: block; border: 4px solid transparent; border-top-color: #555; border-bottom: 0; }
.tri.up { border-top: 0; border-bottom: 4px solid #555; }
.tri.dim { border-top-color: #aaa; }
.tri.up.dim { border-bottom-color: #aaa; }

/* title bar */
.titlebar { display: flex; height: 80px; background: #0173c7; color: #fff; flex: none; }
.tb-left { flex: 1; display: flex; flex-direction: column; }
.quick { display: flex; align-items: center; height: 46px; padding: 0 176px 4px 8px; }
.q-sep { width: 2px; height: 29px; margin: 0 0 0 14px; background: #6fa9da; }
.q { width: 42px; height: 34px; }
.q-more { width: 56px; }
.scale { display: flex; width: 150px; height: 34px; margin-left: 10px; border: 1px solid #a0a0a0; background: #fff; color: #333; }
.scale input { flex: 1; padding-left: 6px; font-size: 17px; }
.scale button { width: 24px; background: #f0f0f0; border-left: 1px solid #a0a0a0; }
.title { margin-left: auto; padding-top: 3px; font-size: 18px; color: #80b8ee; }
.tabs { display: flex; height: 34px; }
.tabs a { padding: 0 17px; line-height: 38px; }
.filebtn { width: 84px; padding-right: 8px; }
.ctx { display: flex; flex-direction: column; background: #005da3; border-top: 4px solid #004275; }
.ctx-title { height: 42px; line-height: 34px; text-align: center; }
.ctx .on { background: #f0f0f0; color: #444; }
.tb-right { width: 219px; }
.winbtns { display: flex; justify-content: flex-end; height: 42px; }
.winbtns button { width: 64px; }
.helpbtns { display: flex; justify-content: flex-end; height: 38px; padding: 4px 9px 0 0; gap: 23px; }

/* ribbon */
.ribbon { display: flex; height: 147px; padding-top: 7px; border-bottom: 1px solid #d0d0d0; flex: none; }
.grp { display: flex; flex-direction: column; height: 132px; border-right: 1px solid #d0d0d0; }
.grp-body { display: flex; height: 110px; }
.grp-name { height: 22px; line-height: 28px; text-align: center; }
.g-layer { width: 87px; }
.g-select { width: 85px; }
.g-input { width: 341px; }
.g-edit { width: 801px; }
.g-common { width: 181px; }
.g-topo { width: 321px; }
.big { flex-direction: column; justify-content: flex-start; padding-top: 3px; }
.big svg { width: 46px; height: 46px; margin-bottom: 5px; }
.big .tri { margin-top: 7px; border-width: 3px; border-bottom: 0; border-top-color: #111; }
.g-layer .big, .g-select .big { width: 84px; }
.grow { flex: 1; }
button:disabled { color: #a0a0a0; }
.w118 { width: 118px; }
.w86 { width: 86px; }
.w102 { width: 102px; }
.w82 { width: 82px; }
.r-sep { width: 1px; height: 96px; margin-top: 3px; background: #c4c4c4; }
.smalls button { height: 35px; gap: 6px; justify-content: flex-start; }
.smalls svg { width: 24px; height: 24px; }
.smalls .tri { border-width: 3px; border-bottom: 0; margin-left: 1px; border-top-color: #111; }
.c1 { width: 147px; padding-left: 14px; }
.c2 { width: 98px; padding-left: 13px; }
.c3 { width: 126px; padding-left: 3px; }
.c4 { padding-left: 14px; }
.c5 { padding: 5px 0 0 19px; }
.c5 button { height: 46px; }
.gallery { display: flex; width: 325px; height: 102px; margin-left: 8px; border: 1px solid #a0a0a0; background: #e4e4e4; }
.cells { flex: 1; display: grid; grid-template-columns: repeat(9, 32px); grid-auto-rows: 32px; justify-items: center; align-items: center; padding: 17px 0 0 6px; }
.cells svg { width: 18px; height: 18px; fill: none; stroke: #858585; }
.gal-scroll { width: 20px; border-left: 1px solid #a0a0a0; display: flex; flex-direction: column; }
.gal-scroll button { flex: 1; border-bottom: 1px solid #a0a0a0; }
.gal-scroll button:last-child { border-bottom: 0; }
.g-topo .grp-body { justify-content: center; padding-right: 2px; }

/* docked panels */
.work { flex: 1; display: flex; gap: 5px; padding: 2px 2px 2px 3px; min-height: 0; }
.panel { display: flex; flex-direction: column; border: 1px solid #a0a0a0; }
.workspace { width: 463px; }
.catalog { width: 712px; }
.panel-head { display: flex; align-items: center; height: 57px; padding: 0 12px 0 18px; color: #555; }
.panel-head h2 { flex: 1; font-size: 22px; }
.panel-head button { width: 24px; height: 24px; }
.catalog h2 { font-size: 20px; }
.tree { flex: 1; margin: 0 3px 3px 2px; border: 1px solid #a0a0a0; background: #fff; }
.tree li { display: flex; align-items: center; gap: 4px; height: 26px; padding-left: 7px; }
.tree li > svg:first-child { margin-right: 1px; }
.tree label { margin-left: 2px; }
.tree .child { padding-left: 37px; background: linear-gradient(90deg, #fff 72px, #dcdcdc 72px); }
.tree .child label { flex: 1; }
.tree li input[type=checkbox] { width: 14px; height: 14px; border-color: #2f6fd0; }
.tree li input[type=checkbox]:checked::after { border-color: #2f6fd0; }

.center { flex: 1; display: flex; flex-direction: column; border: 1px solid #a0a0a0; border-top: 0; min-width: 0; }
.doctabs { display: flex; height: 36px; padding-top: 2px; }
.doctab { gap: 4px; width: 148px; padding-right: 24px; color: #555; }
.doctab.on { width: 143px; padding: 0; background: #a0a0a0; color: #fff; }
.doctab .x { margin-left: 13px; }
.tablist { margin-left: auto; width: 28px; height: 30px; }
.canvas { flex: 1; display: grid; grid-template: 18px 1fr 18px / 19px 1fr 20px; background: #fff; border-top: 3px solid #a0a0a0; min-height: 0; }
.origin { border-right: 1px solid #555; border-bottom: 1px solid #555; background: #f0f0f0; }
.ruler-h { width: 100%; height: 18px; grid-column: 2 / 4; border-bottom: 1px solid #555; overflow: hidden; }
.ruler-v { width: 19px; height: 100%; border-right: 1px solid #555; overflow: hidden; }
.canvas text { font: 12px "Liberation Mono", monospace; fill: #111; }
.map { display: flex; align-items: flex-end; justify-content: flex-end; padding: 0 22px 0 0; }
.licence { font-size: 14px; line-height: 24px; color: #000; font-weight: 400; }
.m-vs, .m-hs { background: #f0f0f0; }
.m-vs { margin-right: 4px; }
.m-hs { margin-bottom: 2px; grid-column: 1 / 3; }
.m-corner { border-left: 1px solid #555; border-top: 1px solid #555; }

.cat-tools { display: flex; align-items: center; height: 42px; padding-left: 5px; }
.cat-tools button { width: 38px; height: 32px; }
.cat-tools .t-sep { margin: 0 6px 0 4px; }
.t-sep { width: 1px; height: 30px; background: #c8c8c8; }
.cat-list { flex: 1; margin: 0 2px 0 3px; border: 1px solid #a0a0a0; border-bottom-width: 2px; background: #fff; }
.cat-list li { height: 26px; white-space: nowrap; }
.cat-list span { font: 15px/26px "Liberation Mono", monospace; }
.cat-list .picked { margin-top: 182px; background: #dcdcdc; }
.cat-list .sys { margin-top: 364px; padding-left: 185px; }
.cat-list .tpl { margin-top: 26px; padding-left: 203px; }
.cat-tabs { display: flex; height: 42px; padding: 0 0 3px 6px; }
.cat-tabs button { gap: 4px; padding: 0 7px; color: #666; }
.cat-tabs .on { width: 131px; background: #d9d9d9; color: #222; font-size: 17px; }

/* dialogs float above the workspace */
.dlg { position: absolute; border: 2px solid #b4b4b4; border-radius: 12px; background: #f0f0f0; overflow: hidden; }
.convert { left: 746px; top: 319px; width: 1371px; box-shadow: 0 14px 50px rgba(0,0,0,.28); }
.params { left: 960px; top: 527px; width: 695px; box-shadow: 0 14px 56px rgba(0,0,0,.5); }
.dlg-title { display: flex; align-items: center; height: 42px; padding-left: 11px; background: #f3f3f3; color: #8a8a8a; font-weight: 400; }
.dlg-title span { flex: 1; line-height: 24px; margin-bottom: 2px; }
.dlg-title button { width: 70px; height: 40px; }
.params .dlg-title { height: 35px; padding-left: 3px; background: linear-gradient(90deg, #e9f5f8, #e9f2fb, #e9f5f8, #ecf1fc); color: #000; }
.params .dlg-title button { width: 49px; height: 33px; margin-bottom: 2px; }
.cv-tools { display: flex; align-items: center; height: 58px; padding: 6px 3px 22px 2px; }
.cv-tools button { width: 38px; height: 30px; }
.cv-tools .t-sep { margin: 0 6px 0 3px; }
.cv-tools .drop { width: 54px; gap: 4px; }
.warn { margin-left: auto; color: #f00; font: 400 18px/26px "Open Sans", "Noto Sans CJK SC", sans-serif; }
.cv-tools .t-sep.last { margin: 0 0 0 18px; height: 34px; }
.frame { margin: 0 17px 0 3px; border: 1px solid #c0c0c0; }
.frame.two { margin-top: 9px; padding: 2px; }
.grid-box { height: 336px; margin: -1px 7px 0 6px; border: 1px solid #a0a0a0; background: #fff; }
table { border-collapse: separate; border-spacing: 0; table-layout: fixed; width: 100%; }
th, td { padding: 0; font-weight: inherit; text-align: left; overflow: hidden; white-space: nowrap; }
th { height: 32px; padding-left: 6px; background: #f0f0f0; border-right: 1px solid #a0a0a0; border-bottom: 1px solid #a0a0a0; line-height: 28px; }
th:last-child { border-right: 0; }
.j0 { width: 29px; }
.j1 { width: 150px; }
.j2 { width: 203px; }
.j3 { width: 277px; }
.j4, .j5 { width: 203px; }
.j6 { width: 207px; }
.jobs td:first-child { background: #f0f0f0; border-right: 1px solid #a0a0a0; }
.jobs td:first-child svg, .prev td:first-child svg { display: block; margin: 0 auto; }
.jgroup td { height: 37px; background: #f0f0f0; }
.jgroup svg { display: inline-block; margin: 0 9px 0 10px; }
.jgroup b { font-weight: 500; color: #333; }
.job td { height: 29px; line-height: 24px; background: #dcdcdc; border-right: 1px solid #cfcfcf; padding-left: 1px; font-size: 17px; color: #222; }
.job td svg { display: inline-block; vertical-align: -3px; margin-right: 4px; }
.job .st svg { margin-left: 5px; vertical-align: -1px; }
.job .cj { font-size: 18px; }
.job .pad { padding-left: 5px; }
.job .btncell, .job td:first-child { padding: 0; }
.btncell button { width: 100%; height: 29px; border: 1px solid #a0a0a0; background: #f0f0f0; }
.progress { display: flex; align-items: center; height: 61px; padding: 0 14px 0 6px; }
.count { margin-left: 12px; font-size: 17px; }
.lvl { margin-left: 56px; }
.style { margin-left: auto; }
.sq { width: 40px; height: 36px; border: 1px solid #a0a0a0; justify-content: flex-start; padding-left: 5px; margin-left: 2px; }
.sq.on { border-top-color: #00007f; border-left-color: #00007f; }
.sq.t { margin-left: 10px; font: bold 19px "Liberation Serif", serif; color: #223; }
.log { display: grid; grid-template: 32px 1fr 26px / 1fr 26px; height: 374px; border: 1px solid #a0a0a0; background: #fff; }
.log table { grid-column: 1 / 3; }
.l0 { width: 25px; }
.l1 { width: 90px; }
.log th { padding-left: 8px; }
.vs, .hs { display: flex; align-items: center; justify-content: space-between; background: #ebebeb; }
.vs { flex-direction: column; padding: 6px 0; }
.hs { padding: 0 6px; }
.thumb { background: #cdcdcd; }
.log .hs .thumb { height: 26px; width: 1142px; margin: 0 auto 0 7px; }
.log::after, .prev::after { content: ""; background: #f0f0f0; }
.cv-foot { display: flex; align-items: center; height: 96px; padding: 22px 17px 0 17px; }
.cv-foot .opt { margin: 0 auto 10px 0; }
.btn { width: 107px; height: 36px; border: 1px solid #a0a0a0; }
.cv-foot .btn { margin-left: 9px; }
.strong { border-color: #444; }

/* form parts */
input[type=checkbox], input[type=radio] { appearance: none; width: 13px; height: 13px; flex: none; border: 1px solid #8a8a8a; background: #fff; position: relative; }
input[type=radio] { border-radius: 50%; }
input[type=radio]:checked::after { content: ""; position: absolute; inset: 2px; border-radius: 50%; background: #555; }
input[type=checkbox]:checked::after { content: ""; position: absolute; left: 3px; top: 0; width: 5px; height: 9px; border: solid #666; border-width: 0 1px 1px 0; transform: rotate(38deg); }
.tree li input[type=checkbox]:checked::after { border-width: 0 2px 2px 0; }
.opt { display: flex; align-items: center; gap: 4px; white-space: nowrap; }
.opt.off { color: #a8a8a8; }
.off input[type=checkbox] { border-color: #ccc; background: #f0f0f0; }
.pm { display: flex; flex-direction: column; gap: 13px; padding: 24px 16px 19px; }
fieldset { margin: 0; min-width: 0; border: 1px solid #c0c0c0; padding: 0 15px 13px 16px; }
legend { height: 26px; padding: 0 7px; margin-left: -5px; line-height: 22px; }
.row { display: flex; align-items: center; height: 29px; }
.line { display: flex; align-items: center; height: 26px; }
.f-prev { padding-top: 16px; }
.prev { display: grid; grid-template: 32px 81px 25px / 1fr 26px; height: 140px; border: 1px solid #a0a0a0; margin-bottom: 8px; }
.prev-clip { grid-area: 1 / 1 / 3 / 3; overflow: hidden; background: #fff; }
.prev .vs { grid-area: 2 / 2; z-index: 1; }
.prev .vs .thumb { width: 26px; height: 26px; }
.prev .hs { grid-area: 3 / 1; }
.prev .hs .thumb { height: 25px; width: 153px; margin: 0 auto 0 8px; }
.prev td { height: 29px; padding-left: 5px; border-right: 1px solid #d0d0d0; border-bottom: 1px solid #d0d0d0; font-size: 17px; color: #333; }
.prev td:first-child { background: #f0f0f0; padding: 0; border-right-color: #a0a0a0; border-bottom: 0; }
.prev td:nth-child(2) { text-align: right; padding-right: 4px; }
.prev .cur td:nth-child(n+2) { background: #dcdcdc; color: #222; }
.p0 { width: 25px; }
.p1 { width: 30px; }
.p2, .p3 { width: 186px; }
.p4 { width: 117px; }
.f-prev .row + .row { margin-top: 14px; }
.lb { width: 97px; padding-top: 4px; }
.nudge { padding-left: 2px; }
.lb2 { margin-left: auto; width: 64px; padding-top: 4px; }
.lb3 { margin-left: auto; width: 98px; padding-top: 4px; }
.combo { flex: 1; display: flex; height: 29px; border: 1px solid #a0a0a0; background: #fff; }
.combo select { flex: 1; appearance: none; padding-left: 4px; font-size: 17px; color: #333; }
.combo span { display: flex; align-items: center; justify-content: center; width: 25px; background: #f0f0f0; border-left: 1px solid #a0a0a0; }
.tx { height: 29px; border: 1px solid #a0a0a0; background: #fff; padding-left: 5px; font-size: 17px; color: #333; }
.tx.ro { background: #f0f0f0; }
.w191 { width: 191px; }
.w341 { width: 341px; }
.w132 { width: 132px; }
.w115 { width: 115px; }
.w109 { width: 109px; }
.w226 { width: 226px; }
.w88 { width: 88px; }
.w74 { width: 75px; }
.w127 { width: 127px; }
.f-gen { padding-top: 10px; }
.ind { padding-left: 44px; margin-top: 5px; }
.spin { display: flex; height: 29px; border: 1px solid #a0a0a0; background: #fff; }
.spin input { flex: 1; width: 0; padding-left: 5px; font-size: 18px; }
.spin > div { width: 25px; border-left: 1px solid #a0a0a0; background: #f0f0f0; }
.spin button { width: 100%; height: 13px; }
.spin button + button { border-top: 1px solid #a0a0a0; height: 14px; }
.spin.off { background: #f0f0f0; color: #a8a8a8; }
.spin.off > div, .spin.off button { border-color: #d0d0d0; }
.spin.off .tri { border-top-color: #b0b0b0; }
.spin.off .tri.up { border-bottom-color: #b0b0b0; }
.f-xy { padding-top: 10px; padding-bottom: 5px; }
.axis { display: flex; align-items: center; width: 199px; }
.axis label { width: 60px; padding: 4px 0 0 1px; white-space: nowrap; }
.axis .spin { width: 87px; }
.axis > span { margin-left: 11px; padding-top: 4px; }
.keep { margin-top: 14px; padding-left: 59px; }
.f-sep { padding: 14px 14px 14px; }
.f-sep legend { margin-left: -3px; }
.f-sep .line { margin-top: 13px; }
.pair { display: flex; gap: 9px; }
.f-btns { flex: 1; padding: 10px 10px 7px 15px; }
.btns { display: flex; gap: 8px; }
.btns .btn { flex: 1; }
.btns .btn:disabled { border-color: #d0d0d0; }
.focus { border: 2px solid #444; outline: 1px dotted #333; outline-offset: -5px; }
.proj { padding-right: 9px; }
.proj legend { padding: 0 2px; margin-left: -7px; }
.pm-foot { display: flex; gap: 9px; }
.pm-foot .opt { margin-right: auto; }
.pm-foot .wide { width: 126px; }

/* tutorial call-outs */
.mark { position: absolute; overflow: visible; }
.mark rect { width: calc(100% - 6px); height: calc(100% - 6px); rx: 2px; fill: none; stroke: #ff1400; stroke-width: 5px; stroke-linecap: round; stroke-dasharray: 6 9; }
.step { position: absolute; width: 40px; height: 40px; border-radius: 50%; background: #2196f3; color: #fff; text-align: center; font: 400 22px/40px "Noto Sans", sans-serif; }
.m1 { left: 742px; top: 358px; width: 56px; height: 50px; }
.m2 { left: 2024px; top: 482px; width: 76px; height: 43px; }
.m3 { left: 1167px; top: 1201px; width: 83px; height: 47px; }
.m4 { left: 1316px; top: 947px; width: 106px; height: 48px; }
.m5 { left: 1314px; top: 1329px; width: 165px; height: 54px; }
.s1 { left: 754px; top: 412px; }
.s2 { left: 2041px; top: 533px; }
.s3 { left: 1240px; top: 1157px; }
.s4 { left: 1430px; top: 916px; }
.s5 { left: 1473px; top: 1285px; }
.s6 { left: 1481px; top: 1414px; }
```
